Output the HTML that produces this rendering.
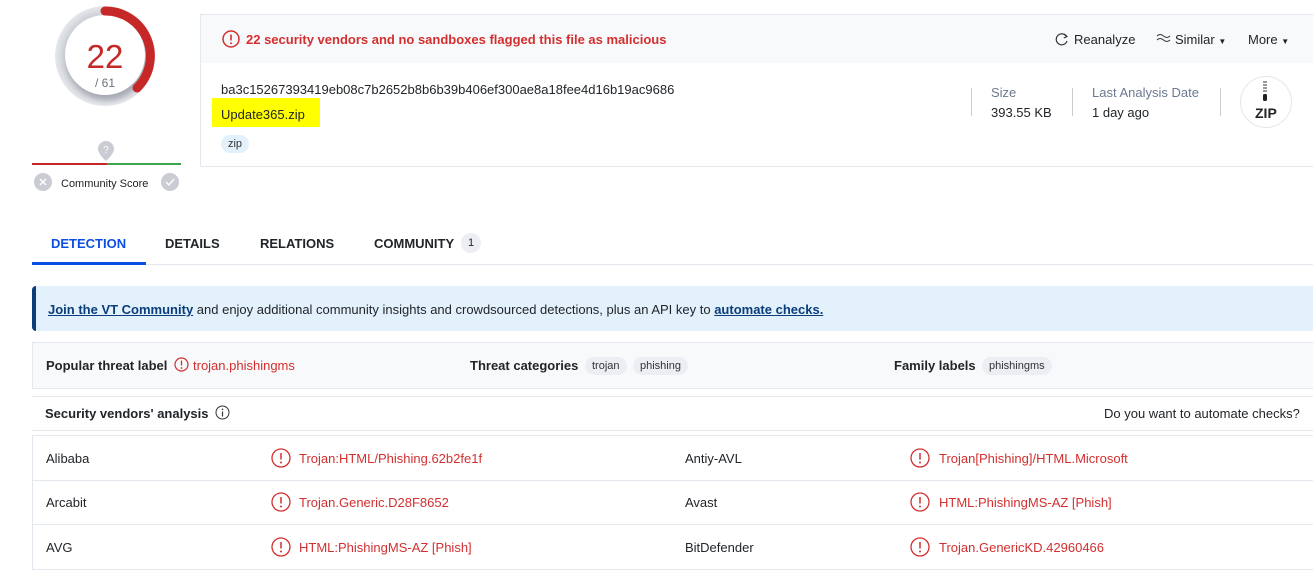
<!DOCTYPE html>
<html><head><meta charset="utf-8"><style>
*{box-sizing:border-box;margin:0;padding:0}
body{width:1313px;height:571px;overflow:hidden;background:#fff;font-family:"Liberation Sans",Arial,sans-serif;color:#212529;font-size:13px;position:relative}
.a{position:absolute;white-space:nowrap}
.red{color:#d32f2f}
.b{font-weight:bold}
.tag{position:absolute;background:#eceef3;border-radius:9px;font-size:11px;padding:3px 7px;color:#333}
.line{position:absolute;background:#e3e7ee}
svg.ic{position:absolute}
</style></head><body>

<!-- score circle -->
<svg class="ic" style="left:50px;top:1px" width="110" height="115" viewBox="50 1 110 115">
<defs><radialGradient id="g" cx="0.5" cy="0.5" r="0.5"><stop offset="0.75" stop-color="#c4c7ce"/><stop offset="1" stop-color="#e6e8ec"/></radialGradient>
<filter id="s" x="-30%" y="-30%" width="160%" height="160%"><feGaussianBlur stdDeviation="3"/></filter></defs>
<circle cx="105" cy="56" r="50" fill="url(#g)"/>
<circle cx="107" cy="60" r="40" fill="#8d929c" opacity="0.6" filter="url(#s)"/>
<circle cx="105" cy="55" r="40" fill="#fff"/>
<path d="M105 11 A45 45 0 0 1 137 88" fill="none" stroke="#c62828" stroke-width="9" stroke-linecap="round"/>
</svg>
<div class="a" style="left:70px;top:38px;width:70px;text-align:center;font-size:33px;color:#c62828">22</div>
<div class="a" style="left:70px;top:76px;width:70px;text-align:center;font-size:12px;color:#6b7280">/ 61</div>
<svg class="ic" style="left:97px;top:140px" width="18" height="22" viewBox="0 0 18 22"><path d="M9 1a8 8 0 0 1 8 8c0 5-8 12-8 12S1 14 1 9a8 8 0 0 1 8-8z" fill="#c9ccd3"/><text x="9" y="13" font-size="10" fill="#fff" text-anchor="middle" font-family="Liberation Sans">?</text></svg>
<div class="a" style="left:32px;top:163px;width:75px;height:2px;background:#c62828"></div>
<div class="a" style="left:107px;top:163px;width:74px;height:2px;background:#3fa34d"></div>
<svg class="ic" style="left:34px;top:173px" width="18" height="18"><circle cx="9" cy="9" r="9" fill="#c9ccd3"/><path d="M6 6l6 6M12 6l-6 6" stroke="#fff" stroke-width="1.4"/></svg>
<div class="a" style="left:61px;top:178px;font-size:11px">Community Score</div>
<svg class="ic" style="left:161px;top:173px" width="18" height="18"><circle cx="9" cy="9" r="9" fill="#c9ccd3"/><path d="M5 9l3 3 5-6" stroke="#fff" stroke-width="1.4" fill="none"/></svg>

<!-- top card -->
<div class="a" style="left:200px;top:14px;width:1114px;height:153px;border:1px solid #e3e7ee;border-right:none"></div>
<div class="a" style="left:201px;top:15px;width:1112px;height:48px;background:#f8f9fb"></div>
<svg class="ic" style="left:222px;top:30px" width="18" height="18"><circle cx="9" cy="9" r="8" fill="none" stroke="#d32f2f" stroke-width="1.5"/><path d="M9 4.5v6" stroke="#d32f2f" stroke-width="1.6"/><circle cx="9" cy="13.2" r="1" fill="#d32f2f"/></svg>
<div class="a red b" style="left:246px;top:32px;font-size:13px">22 security vendors and no sandboxes flagged this file as malicious</div>
<svg class="ic" style="left:1055px;top:32px" width="14" height="14"><path d="M11.5 4.5A5.5 5.5 0 1 0 12 9" fill="none" stroke="#333" stroke-width="1.2"/><path d="M9 2l3 2.5-3.2 1.5" fill="none" stroke="#333" stroke-width="1.2"/></svg>
<div class="a" style="left:1074px;top:32px">Reanalyze</div>
<svg class="ic" style="left:1156px;top:33px" width="15" height="10"><path d="M1 3q3-3 6.5 0t6.5 0M1 7q3-3 6.5 0t6.5 0" fill="none" stroke="#333" stroke-width="1"/></svg>
<div class="a" style="left:1175px;top:32px">Similar <span style="font-size:8px">▼</span></div>
<div class="a" style="left:1248px;top:32px">More <span style="font-size:8px">▼</span></div>

<div class="a" style="left:221px;top:82px;font-size:13px">ba3c15267393419eb08c7b2652b8b6b39b406ef300ae8a18fee4d16b19ac9686</div>
<div class="a" style="left:212px;top:98px;width:108px;height:29px;background:#ffff00"></div>
<div class="a" style="left:221px;top:107px;font-size:13px">Update365.zip</div>
<div class="a" style="left:221px;top:135px;width:28px;height:18px;background:#e3f1fc;border-radius:9px;font-size:11px;text-align:center;line-height:18px;color:#333">zip</div>

<div class="line" style="left:971px;top:88px;width:1px;height:28px;background:#ccc"></div>
<div class="a" style="left:991px;top:85px;color:#6b7a90">Size</div>
<div class="a" style="left:991px;top:105px">393.55 KB</div>
<div class="line" style="left:1072px;top:88px;width:1px;height:28px;background:#ccc"></div>
<div class="a" style="left:1092px;top:85px;color:#6b7a90">Last Analysis Date</div>
<div class="a" style="left:1092px;top:105px">1 day ago</div>
<div class="line" style="left:1220px;top:88px;width:1px;height:28px;background:#ccc"></div>
<div class="a" style="left:1240px;top:76px;width:52px;height:52px;border:1px solid #e3e7ee;border-radius:50%"></div>
<svg class="ic" style="left:1260px;top:81px" width="10" height="22"><path d="M3 1h4M3 4h4M3 7h4M3 10h4" stroke="#333" stroke-width="1"/><rect x="3" y="13" width="4" height="7" rx="1.5" fill="#222"/></svg>
<div class="a b" style="left:1255px;top:105px;font-size:14px">ZIP</div>

<!-- tabs -->
<div class="a b" style="left:51px;top:236px;color:#0b4ee3">DETECTION</div>
<div class="a b" style="left:165px;top:236px">DETAILS</div>
<div class="a b" style="left:260px;top:236px">RELATIONS</div>
<div class="a b" style="left:374px;top:236px">COMMUNITY</div>
<div class="a" style="left:461px;top:233px;width:20px;height:20px;border-radius:50%;background:#eceef3;font-size:11px;text-align:center;line-height:20px">1</div>
<div class="line" style="left:32px;top:264px;width:1281px;height:1px"></div>
<div class="a" style="left:32px;top:262px;width:114px;height:3px;background:#0b4ee3"></div>

<!-- banner -->
<div class="a" style="left:32px;top:286px;width:1281px;height:45px;background:#e3f1fc;border-left:4px solid #0a3d7a;border-radius:4px 0 0 4px"></div>
<div class="a" style="left:48px;top:302px">
<span class="b" style="color:#0a3d7a;text-decoration:underline">Join the VT Community</span> and enjoy additional community insights and crowdsourced detections, plus an API key to <span class="b" style="color:#0a3d7a;text-decoration:underline">automate checks.</span></div>

<!-- threat row -->
<div class="a" style="left:32px;top:342px;width:1281px;height:47px;background:#f8f9fb;border:1px solid #e3e7ee;border-right:none"></div>
<div class="a b" style="left:46px;top:358px">Popular threat label</div>
<svg class="ic" style="left:174px;top:357px" width="15" height="15"><circle cx="7.5" cy="7.5" r="6.5" fill="none" stroke="#d32f2f" stroke-width="1.2"/><path d="M7.5 3.5v5" stroke="#d32f2f" stroke-width="1.3"/><circle cx="7.5" cy="11" r=".9" fill="#d32f2f"/></svg>
<div class="a red" style="left:193px;top:358px">trojan.phishingms</div>
<div class="a b" style="left:470px;top:358px">Threat categories</div>
<div class="tag" style="left:585px;top:357px">trojan</div>
<div class="tag" style="left:633px;top:357px">phishing</div>
<div class="a b" style="left:894px;top:358px">Family labels</div>
<div class="tag" style="left:982px;top:357px">phishingms</div>

<!-- vendors header -->
<div class="line" style="left:32px;top:396px;width:1281px;height:1px"></div>
<div class="a b" style="left:45px;top:406px">Security vendors' analysis</div>
<svg class="ic" style="left:215px;top:405px" width="15" height="15"><circle cx="7.5" cy="7.5" r="6.5" fill="none" stroke="#333" stroke-width="1"/><path d="M7.5 6.5v5" stroke="#333" stroke-width="1.2"/><circle cx="7.5" cy="4.3" r=".8" fill="#333"/></svg>
<div class="a" style="left:1104px;top:406px">Do you want to automate checks?</div>
<div class="line" style="left:32px;top:430px;width:1281px;height:1px"></div>

<!-- table -->
<div class="a" style="left:32px;top:435px;width:1281px;height:135px;border:1px solid #e3e7ee;border-right:none"></div>
<div class="line" style="left:32px;top:480px;width:1281px;height:1px"></div>
<div class="line" style="left:32px;top:524px;width:1281px;height:1px"></div>

<div class="a" style="left:46px;top:451px">Alibaba</div>
<div class="a red" style="left:299px;top:451px">Trojan:HTML/Phishing.62b2fe1f</div>
<div class="a" style="left:685px;top:451px">Antiy-AVL</div>
<div class="a red" style="left:939px;top:451px">Trojan[Phishing]/HTML.Microsoft</div>
<div class="a" style="left:46px;top:495px">Arcabit</div>
<div class="a red" style="left:299px;top:495px">Trojan.Generic.D28F8652</div>
<div class="a" style="left:685px;top:495px">Avast</div>
<div class="a red" style="left:939px;top:495px">HTML:PhishingMS-AZ [Phish]</div>
<div class="a" style="left:46px;top:540px">AVG</div>
<div class="a red" style="left:299px;top:540px">HTML:PhishingMS-AZ [Phish]</div>
<div class="a" style="left:685px;top:540px">BitDefender</div>
<div class="a red" style="left:939px;top:540px">Trojan.GenericKD.42960466</div>

<svg class="ic" style="left:0;top:0" width="1313" height="571" pointer-events="none">
<defs><g id="w"><circle cx="0" cy="0" r="9" fill="none" stroke="#d32f2f" stroke-width="1.3"/><path d="M0 -5v6.5" stroke="#d32f2f" stroke-width="1.5"/><circle cx="0" cy="4.5" r="1" fill="#d32f2f"/></g></defs>
<use href="#w" x="281" y="458"/><use href="#w" x="920" y="458"/>
<use href="#w" x="281" y="502"/><use href="#w" x="920" y="502"/>
<use href="#w" x="281" y="547"/><use href="#w" x="920" y="547"/>
</svg>
</body></html>
